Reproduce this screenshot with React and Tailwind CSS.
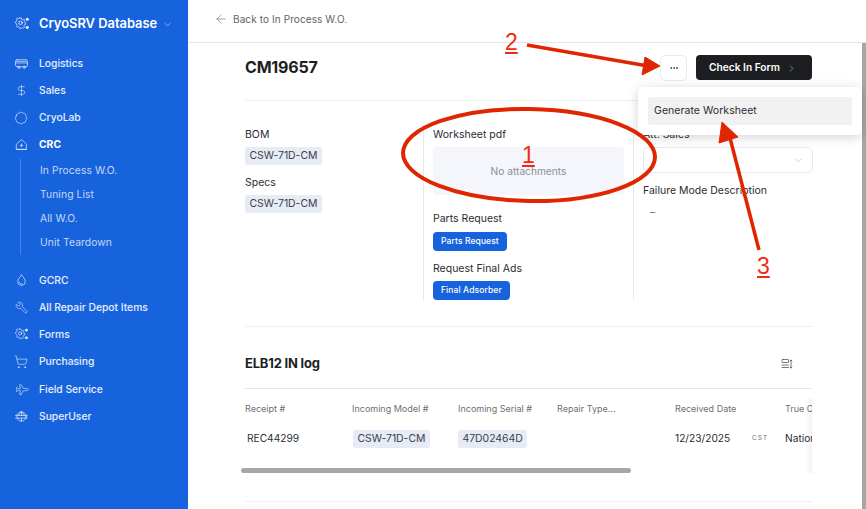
import { DollarSign, Badge, Wrench, ShoppingCart, Plane, ChevronDown, ChevronRight, ArrowLeft, Ellipsis } from 'lucide-react'

function SvgIcon({ size = 13, className = '', children }) {
  return (
    <svg width={size} height={size} viewBox="0 0 24 24" fill="none" stroke="currentColor" strokeWidth="1.5" strokeLinecap="round" strokeLinejoin="round" className={className}>
      {children}
    </svg>
  )
}

function TruckIcon(props) {
  return (
    <SvgIcon {...props}>
      <rect x="1" y="5" width="22" height="13" rx="3" />
      <path d="M1 11h22M3 8h18" />
      <circle cx="7" cy="19" r="2" />
      <circle cx="17" cy="19" r="2" />
    </SvgIcon>
  )
}

function HouseIcon(props) {
  return (
    <SvgIcon {...props}>
      <path d="M3 11 12 3l9 8v10H3z" />
      <path d="M3 21h18M12 11v5M9.5 13.5h5" />
    </SvgIcon>
  )
}

function DropIcon(props) {
  return (
    <SvgIcon {...props}>
      <path d="M12 2c4 4.5 7 8 7 12a7 7 0 0 1-14 0c0-4 3-7.500 7-12z" />
      <path d="M8 15c1 2.500 3 3.500 5 3.500" />
    </SvgIcon>
  )
}

function GearDotsIcon(props) {
  return (
    <SvgIcon {...props}>
      <path d="M9 3h3l.6 2.600 2.400 1 2.200-1.400 2 2-1.400 2.200 1 2.400 2.200.6v3l-2.600.6-1 2.400 1.400 2.200-2 2-2.200-1.400-2.400 1L12 23H9l-.6-2.600-2.400-1-2.200 1.400-2-2 1.400-2.200-1-2.400L0 13v-3l2.200-.6 1-2.400L1.800 4.800l2-2L6 4.200l2.400-1z" transform="translate(1 -1) scale(.82 .9)" />
      <circle cx="9.500" cy="10" r="3" />
      <circle cx="21" cy="4" r="2" fill="currentColor" />
      <circle cx="21" cy="18" r="2" fill="currentColor" />
    </SvgIcon>
  )
}

function GlobeIcon(props) {
  return (
    <SvgIcon {...props}>
      <circle cx="12" cy="12" r="8.500" />
      <path d="M1 10h22M1 15h22M12 3.500V10M12 15v5.500" />
      <path d="M12 3.500C8 6 7.500 8 7.500 10M12 3.500c4 2.500 4.500 4.500 4.500 6.500" />
    </SvgIcon>
  )
}

function DensityIcon(props) {
  return (
    <SvgIcon {...props}>
      <rect x="2" y="3" width="13" height="6" rx="1" />
      <path d="M2 14h13M2 19h13M20 4v16M18 6l2-2 2 2M18 18l2 2 2-2" />
    </SvgIcon>
  )
}

function NavItem({ icon: Icon, label, bold, tall }) {
  return (
    <div className={`flex items-center gap-[11px] pl-[14px] text-[10.3px] ${tall ? 'h-[27.2px]' : 'h-[27px]'} ${bold ? 'font-bold text-white' : 'font-medium text-white/90'}`}>
      <span className="flex w-[14px] shrink-0 justify-center text-white/75"><Icon /></span>
      <span>{label}</span>
    </div>
  )
}

function Tag({ children }) {
  return (
    <span className="flex h-[18px] w-fit items-center rounded-[3px] bg-[#e6ebf6] px-[4.5px] text-[10.4px] text-[#3a3f4a]">
      {children}
    </span>
  )
}

function Label({ children, className = '' }) {
  return <div className={`h-[14px] pt-[1px] text-[10.5px] leading-[14px] text-[#2a2d33] ${className}`}>{children}</div>
}

function BlueButton({ children }) {
  return (
    <span className="inline-block rounded-[4px] bg-[#1763dd] px-2 py-[3px] text-[8.5px] font-medium leading-[13px] tracking-[0.1px] text-white">
      {children}
    </span>
  )
}

function Sidebar() {
  return (
    <aside className="h-full w-[188px] shrink-0 bg-[#1763dd]">
      <div className="flex h-[50px] items-center gap-[10px] pb-[2px] pl-[15px] text-white">
        <GearDotsIcon size={14} className="text-white/85" />
        <span className="text-[12.9px] font-semibold">CryoSRV Database</span>
        <ChevronDown size={11} strokeWidth={1.25} className="-ml-[5px] text-white/80" />
      </div>
      <NavItem icon={TruckIcon} label="Logistics" />
      <NavItem icon={() => <DollarSign size={13} strokeWidth={1.25} />} label="Sales" />
      <NavItem icon={() => <Badge size={14} strokeWidth={1.25} />} label="CryoLab" />
      <NavItem icon={HouseIcon} label="CRC" bold />
      <div className="ml-[20px] mt-[1px] border-l border-white/20 pl-[19px] text-[10.3px] tracking-[0.1px] text-white/75">
        <div className="flex h-[24px] items-center">In Process W.O.</div>
        <div className="flex h-[24px] items-center">Tuning List</div>
        <div className="flex h-[24px] items-center">All W.O.</div>
        <div className="flex h-[24px] items-center">Unit Teardown</div>
      </div>
      <div className="mt-[12px]">
        <NavItem tall icon={DropIcon} label="GCRC" />
        <NavItem tall icon={() => <Wrench size={13} strokeWidth={1.25} className="-scale-x-100" />} label="All Repair Depot Items" />
        <NavItem tall icon={GearDotsIcon} label="Forms" />
        <NavItem tall icon={() => <ShoppingCart size={14} strokeWidth={1.25} />} label="Purchasing" />
        <NavItem tall icon={() => <Plane size={13} strokeWidth={1.25} className="rotate-45" />} label="Field Service" />
        <NavItem tall icon={GlobeIcon} label="SuperUser" />
      </div>
    </aside>
  )
}

const columns = [
  { w: 'w-[107px]', head: 'Receipt #' },
  { w: 'w-[106px]', head: 'Incoming Model #' },
  { w: 'w-[99px]', head: 'Incoming Serial #' },
  { w: 'w-[118px]', head: 'Repair Type...' },
  { w: 'w-[110px]', head: 'Received Date' },
  { w: 'w-[60px]', head: 'True Customer' },
]

function LogTable() {
  return (
    <div className="relative -ml-[4px] overflow-hidden pl-[4px]">
      <div className="flex h-[41px] w-[640px] items-center pb-[2px] text-[9px] text-[#6b7078]">
        {columns.map((c) => (
          <div key={c.head} className={`${c.w} shrink-0 whitespace-nowrap`}>{c.head}</div>
        ))}
      </div>
      <div className="flex h-[18px] w-[640px] items-center text-[10.2px] text-[#2a2d33]">
        <div className="w-[107px] shrink-0 pl-[2px]">REC44299</div>
        <div className="w-[106px] shrink-0 pl-[1px]"><Tag>CSW-71D-CM</Tag></div>
        <div className="w-[99px] shrink-0"><Tag>47D02464D</Tag></div>
        <div className="w-[118px] shrink-0" />
        <div className="flex w-[110px] shrink-0 items-center">
          <span className="w-[77px]">12/23/2025</span>
          <span className="text-[6.5px] tracking-[1px] text-[#6b7078]">CST</span>
        </div>
        <div className="w-[60px] shrink-0 whitespace-nowrap">National</div>
      </div>
      <div className="-ml-[4px] mt-[20px] h-[5px] w-[390px] rounded-full bg-[#a6a6a6]" />
      <div className="absolute right-0 top-[10px] h-[78px] w-[8px] bg-gradient-to-r from-transparent to-black/5" />
    </div>
  )
}

export default function App() {
  return (
    <div className="relative flex h-[509px] w-[866px] overflow-hidden bg-white [font-family:Inter,sans-serif]">
      <Sidebar />
      <main className="min-w-0 flex-1">
        <header className="flex h-[43px] items-center gap-[5px] border-b border-[#e4e5e8] pb-[4px] pl-[26px] text-[10px] tracking-[0.1px] text-[#5d626b]">
          <ArrowLeft size={14} strokeWidth={1} />
          Back to In Process W.O.
        </header>
        <div className="flex h-[466px]">
          <div className="w-[674px] shrink-0 overflow-hidden pl-[57px]">
            <div className="flex h-[58px] w-[567px] items-center justify-between border-b border-[#eeeff1] pb-[8px]">
              <h1 className="pb-[2px] text-[16px] font-bold tracking-[-0.2px] text-[#1c1e22]">CM19657</h1>
              <div className="flex items-center gap-[9px]">
                <div className="flex h-[26px] w-[27px] items-center justify-center rounded-[5px] border border-[#e8e9ec] bg-white text-[#2a2d33]">
                  <Ellipsis size={10} strokeWidth={2} />
                </div>
                <div className="flex h-[25px] w-[116px] items-center gap-[6px] rounded-[4px] bg-[#1c1e22] pl-[13px] pt-[1px] text-[10.2px] font-semibold text-white">
                  Check In Form
                  <ChevronRight size={11} strokeWidth={1.25} className="text-white/70" />
                </div>
              </div>
            </div>

            <div className="flex h-[226px] w-[567px] border-b border-[#eeeff1] pt-[26px]">
              <div className="w-[178px] shrink-0">
                <Label>BOM</Label>
                <div className="mt-[6px]"><Tag>CSW-71D-CM</Tag></div>
                <Label className="mt-[10px]">Specs</Label>
                <div className="mt-[6px]"><Tag>CSW-71D-CM</Tag></div>
              </div>
              <div className="h-[173px] w-[211px] shrink-0 border-l border-r border-[#e6e7ea] px-[9px]">
                <Label>Worksheet pdf</Label>
                <div className="mt-[6px] flex h-[48px] w-[191px] items-center justify-center rounded-[4px] bg-[#f4f6fb] pt-[2px] text-[10.2px] text-[#8b8f97]">
                  No attachments
                </div>
                <Label className="mt-[16px]">Parts Request</Label>
                <div className="mt-[7px] flex"><BlueButton>Parts Request</BlueButton></div>
                <Label className="mt-[10px]">Request Final Ads</Label>
                <div className="mt-[6px] flex"><BlueButton>Final Adsorber</BlueButton></div>
              </div>
              <div className="pl-[9px]">
                <Label>Att. Sales</Label>
                <div className="mt-[6px] flex h-[26px] w-[170px] items-center justify-end rounded-[5px] border border-[#e8e9ec] pr-[8px] text-[#a9acb3]">
                  <ChevronDown size={11} strokeWidth={1.25} />
                </div>
                <Label className="mt-[10px]">Failure Mode Description</Label>
                <div className="mt-[8px] pl-[7px] text-[10.5px] text-[#6b7078]">–</div>
              </div>
            </div>

            <div className="flex h-[62px] w-[567px] items-center justify-between border-b border-[#e6e7ea] pr-[19px] pt-[12px]">
              <h2 className="text-[13px] font-bold tracking-[-0.2px] text-[#1c1e22]">ELB12 IN log</h2>
              <DensityIcon size={12} className="text-[#4a4e56]" />
            </div>

            <div className="w-[567px] border-b border-[#eeeff1] pb-[28px]">
              <LogTable />
            </div>
          </div>
          <div className="ml-auto h-full w-[4px] bg-[#a6a6a6]" />
        </div>
      </main>

      {/* menu popup */}
      <div className="absolute left-[638px] top-[87px] w-[224px] rounded-[5px] bg-white p-[10px] shadow-[0_2px_12px_rgba(0,0,0,0.18)]">
        <div className="flex h-[28px] items-center rounded-[2px] bg-[#f1f1f2] pl-[6px] text-[10.5px] tracking-[0.05px] text-[#2a2d33]">
          Generate Worksheet
        </div>
      </div>

      {/* red annotations */}
      <svg className="pointer-events-none absolute left-0 top-0" width="866" height="509" viewBox="0 0 866 509" fill="none">
        <ellipse cx="529" cy="155" rx="126" ry="46" stroke="#e02600" strokeWidth="4" transform="rotate(1 529 155)" />
        <path d="M527 45 L648 66" stroke="#e02600" strokeWidth="3.5" />
        <path d="M645 57 L660 66 L642 75 Z" fill="#e02600" stroke="#e02600" />
        <path d="M759 250 L730 138" stroke="#e02600" strokeWidth="3.5" />
        <path d="M719 143 L722 122 L738 137 Z" fill="#e02600" stroke="#e02600" />
      </svg>
      <span className="absolute left-[505px] top-[33px] font-['Liberation_Sans'] text-[23px] leading-[18px] text-[#f02a12] underline underline-offset-2">2</span>
      <span className="absolute left-[522px] top-[146px] font-['Liberation_Sans'] text-[23px] leading-[18px] text-[#f02a12] underline underline-offset-2">1</span>
      <span className="absolute left-[757px] top-[257px] font-['Liberation_Sans'] text-[23px] leading-[18px] text-[#f02a12] underline underline-offset-2">3</span>
    </div>
  )
}
